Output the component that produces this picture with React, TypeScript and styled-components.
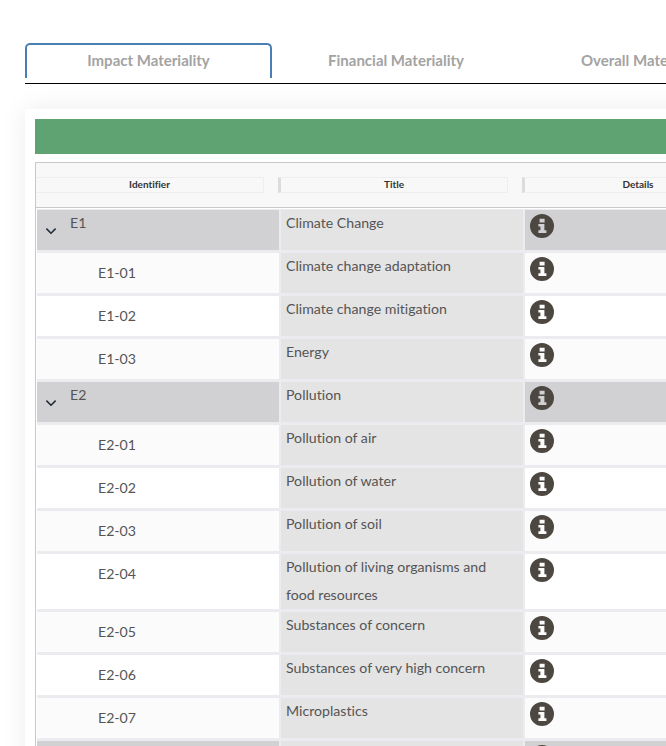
import React from 'react'
import styled, { createGlobalStyle } from 'styled-components'

interface Row {
  id: string
  title: string
  group?: boolean
}

const rows: Row[] = [
  { id: 'E1', title: 'Climate Change', group: true },
  { id: 'E1-01', title: 'Climate change adaptation' },
  { id: 'E1-02', title: 'Climate change mitigation' },
  { id: 'E1-03', title: 'Energy' },
  { id: 'E2', title: 'Pollution', group: true },
  { id: 'E2-01', title: 'Pollution of air' },
  { id: 'E2-02', title: 'Pollution of water' },
  { id: 'E2-03', title: 'Pollution of soil' },
  { id: 'E2-04', title: 'Pollution of living organisms and food resources' },
  { id: 'E2-05', title: 'Substances of concern' },
  { id: 'E2-06', title: 'Substances of very high concern' },
  { id: 'E2-07', title: 'Microplastics' },
  { id: 'E3', title: 'Water and marine resources', group: true },
]

const tabs = ['Impact Materiality', 'Financial Materiality', 'Overall Materiality']

const InfoIcon = () => (
  <svg width="24" height="24" viewBox="0 0 24 24">
    <path
      fillRule="evenodd"
      fill="#4d4741"
      d="M12 0a12 12 0 1 1 0 24a12 12 0 0 1 0-24zM9.6 4.8v3.8h5v-3.8zM8.4 10v2.6h2v3.6h-2v2.8h8v-2.8h-2v-6.2z"
    />
  </svg>
)

const ChevronIcon = () => (
  <svg width="12" height="8" viewBox="0 0 12 8">
    <path d="M1.4 1.6L6 6.2l4.6-4.6" fill="none" stroke="#1f2933" strokeWidth="1.5" />
  </svg>
)

const App: React.FC = () => {
  return (
    <Page>
      <GlobalStyle />
      <TabBar>
        {tabs.map((tab, i) => (
          <Tab key={tab} $active={i === 0}>
            {tab}
          </Tab>
        ))}
      </TabBar>
      <Card>
        <GreenBar />
        <Table>
          <HeaderRow>
            <HeaderCell>Identifier</HeaderCell>
            <HeaderCell $handle>Title</HeaderCell>
            <HeaderCell $handle>Details</HeaderCell>
          </HeaderRow>
          {rows.map((row, i) => (
            <BodyRow key={row.id}>
              {row.group ? (
                <GroupCell>
                  <Chevron>
                    <ChevronIcon />
                  </Chevron>
                  <GroupId>{row.id}</GroupId>
                </GroupCell>
              ) : (
                <ChildCell $odd={i % 2 === 1}>{row.id}</ChildCell>
              )}
              <TitleCell>
                <TitleText>{row.title}</TitleText>
              </TitleCell>
              <DetailCell $group={row.group} $odd={i % 2 === 1}>
                <InfoIcon />
              </DetailCell>
            </BodyRow>
          ))}
        </Table>
      </Card>
    </Page>
  )
}

export default App

// Styled components
const GlobalStyle = createGlobalStyle`
  html, body {
    margin: 0;
    padding: 0;
    background: #fff;
    overflow: hidden;
  }
  body {
    font-family: 'Lato', 'Liberation Sans', sans-serif;
    font-variant-ligatures: none;
  }
`

const Page = styled.div`
  width: 666px;
  height: 746px;
  overflow: hidden;
  padding: 43px 0 0 25px;
  box-sizing: border-box;
`

const TabBar = styled.div`
  display: flex;
  width: 900px;
  height: 40px;
  border-bottom: 1px solid #000;
`

const Tab = styled.div<{ $active?: boolean }>`
  flex: none;
  width: 247px;
  height: 35px;
  margin-right: 0.5px;
  box-sizing: border-box;
  border: 2px solid ${({ $active }) => ($active ? '#4a7fb5' : 'transparent')};
  border-bottom: none;
  border-radius: 5px 5px 0 0;
  display: flex;
  justify-content: center;
  align-items: center;
  padding-bottom: 4px;
  font-size: 15px;
  font-weight: 700;
  color: #a3a3a3;
  white-space: nowrap;
`

const Card = styled.div`
  width: 900px;
  margin-top: 25px;
  padding: 10px;
  background: #fff;
  box-shadow: 0 0 25px rgba(0, 0, 0, 0.08);
`

const GreenBar = styled.div`
  height: 35px;
  background: #5fa372;
`

const Table = styled.div`
  margin-top: 8px;
  border: 1px solid #c8c8c8;
  border-width: 1px 0 0 1px;
`

const HeaderRow = styled.div`
  display: grid;
  grid-template-columns: 242px 244px 244px;
  height: 45px;
  box-sizing: border-box;
  align-items: center;
  background: #f8f8f8;
  border-bottom: 1px solid #c8c8c8;
  margin-bottom: 1px;
`

const HeaderCell = styled.div<{ $handle?: boolean }>`
  height: 16px;
  margin-right: 14px;
  padding-bottom: 2px;
  box-sizing: border-box;
  border: 1px solid #eeeeee;
  border-left: ${({ $handle }) => ($handle ? '3px solid #dcdcdc' : 'none')};
  display: flex;
  justify-content: center;
  align-items: center;
  font-size: 10px;
  font-weight: 700;
  color: #333;
`

const BodyRow = styled.div`
  display: grid;
  grid-template-columns: 242px 242px 242px;
  column-gap: 2px;
  min-height: 43px;
  box-sizing: border-box;
  margin-left: 1px;
  background: #ebebf0;
  border-top: 1px solid #ebebf0;
  border-bottom: 2px solid #ebebf0;
`

const GroupCell = styled.div`
  display: flex;
  align-items: flex-start;
  padding: 4px 0 0 8px;
  background: #d1d1d3;
  font-size: 14.15px;
  color: #555;
`

const Chevron = styled.span`
  display: flex;
  margin-top: 13px;
`

const GroupId = styled.span`
  margin-left: 13px;
  line-height: 17px;
`

const ChildCell = styled.div<{ $odd?: boolean }>`
  padding: 11px 0 0 61px;
  background: ${({ $odd }) => ($odd ? '#fbfbfb' : '#ffffff')};
  font-size: 14.15px;
  line-height: 17px;
  color: #555;
`

const TitleCell = styled.div`
  background: #e4e4e4;
  padding: 0 24px 0 5px;
  font-size: 14.15px;
  line-height: 28px;
  color: #555;
`

const TitleText = styled.span`
  display: block;
  margin-top: -1px;
`

const DetailCell = styled.div<{ $group?: boolean; $odd?: boolean }>`
  padding: 4px 0 0 5px;
  line-height: 0;
  background: ${({ $group, $odd }) => ($group ? '#d1d1d3' : $odd ? '#fbfbfb' : '#ffffff')};
`
